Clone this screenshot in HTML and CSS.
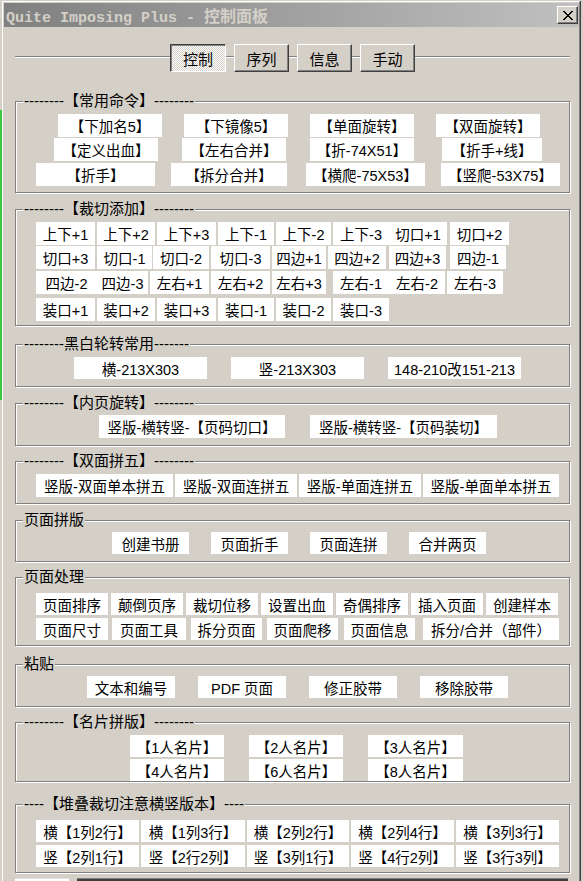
FILE: index.html
```html
<!DOCTYPE html>
<html lang="zh-CN">
<head>
<meta charset="utf-8">
<title>Quite Imposing Plus - 控制面板</title>
<link rel="stylesheet" href="styles.css">
</head>
<body>
<div class="window">
  <div class="titlebar">
    <span class="title">Quite Imposing Plus - <span class="title-cjk">控制面板</span></span>
    <button class="close" aria-label="关闭"><svg width="10" height="9" viewBox="0 0 10 9" shape-rendering="crispEdges"><path fill="#000" d="M0 0h2v1H0z M8 0h2v1H8z M1 1h2v1H1z M7 1h2v1H7z M2 2h2v1H2z M6 2h2v1H6z M3 3h4v1H3z M4 4h2v1H4z M3 5h4v1H3z M2 6h2v1H2z M6 6h2v1H6z M1 7h2v1H1z M7 7h2v1H7z M0 8h2v1H0z M8 8h2v1H8z"/></svg></button>
  </div>

  <div class="tabbar">
    <button class="tab active w56">控制</button>
    <button class="tab">序列</button>
    <button class="tab">信息</button>
    <button class="tab">手动</button>
  </div>

  <section class="group g1">
    <div class="legend">--------【常用命令】--------</div>
    <div class="rows">
      <div class="row r1">
        <button class="btn w104">【下加名5】</button>
        <button class="btn w104">【下镜像5】</button>
        <button class="btn w104">【单面旋转】</button>
        <button class="btn w104">【双面旋转】</button>
      </div>
      <div class="row r2">
        <button class="btn w104">【定义出血】</button>
        <button class="btn w104">【左右合并】</button>
        <button class="btn w104">【折-74X51】</button>
        <button class="btn w100 n4">【折手+线】</button>
      </div>
      <div class="row r3">
        <button class="btn w119">【折手】</button>
        <button class="btn w116">【拆分合并】</button>
        <button class="btn w119 n3">【横爬-75X53】</button>
        <button class="btn w119">【竖爬-53X75】</button>
      </div>
    </div>
  </section>

  <section class="group g2">
    <div class="legend">--------【裁切添加】--------</div>
    <div class="rows">
      <div class="row r1">
        <button class="btn w59">上下+1</button>
        <button class="btn w58">上下+2</button>
        <button class="btn w59">上下+3</button>
        <button class="btn w56">上下-1</button>
        <button class="btn w55">上下-2</button>
        <button class="btn w56">上下-3</button>
        <button class="btn w58 n-2">切口+1</button>
        <button class="btn w59 n1">切口+2</button>
      </div>
      <div class="row r2">
        <button class="btn w59">切口+3</button>
        <button class="btn w55">切口-1</button>
        <button class="btn w56 n-1">切口-2</button>
        <button class="btn w59">切口-3</button>
        <button class="btn w54">四边+1</button>
        <button class="btn w58">四边+2</button>
        <button class="btn w57 n1">四边+3</button>
        <button class="btn w56 n2">四边-1</button>
      </div>
      <div class="row r3">
        <button class="btn w61">四边-2</button>
        <button class="btn w51 n-2">四边-3</button>
        <button class="btn w59">左右+1</button>
        <button class="btn w59">左右+2</button>
        <button class="btn w54">左右+3</button>
        <button class="btn w56 n5">左右-1</button>
        <button class="btn w56 n-2">左右-2</button>
        <button class="btn w56">左右-3</button>
      </div>
      <div class="row r4">
        <button class="btn w59">装口+1</button>
        <button class="btn w58">装口+2</button>
        <button class="btn w59">装口+3</button>
        <button class="btn w56">装口-1</button>
        <button class="btn w55">装口-2</button>
        <button class="btn w56">装口-3</button>
      </div>
    </div>
  </section>

  <section class="group g3">
    <div class="legend">--------黑白轮转常用-------</div>
    <div class="rows">
      <div class="row">
        <button class="btn w133">横-213X303</button>
        <button class="btn w133">竖-213X303</button>
        <button class="btn w133">148-210改151-213</button>
      </div>
    </div>
  </section>

  <section class="group g4">
    <div class="legend">--------【内页旋转】--------</div>
    <div class="rows">
      <div class="row">
        <button class="btn w186">竖版-横转竖-【页码切口】</button>
        <button class="btn w187">竖版-横转竖-【页码装切】</button>
      </div>
    </div>
  </section>

  <section class="group g5">
    <div class="legend">--------【双面拼五】--------</div>
    <div class="rows">
      <div class="row">
        <button class="btn w137">竖版-双面单本拼五</button>
        <button class="btn w122">竖版-双面连拼五</button>
        <button class="btn w122">竖版-单面连拼五</button>
        <button class="btn w136">竖版-单面单本拼五</button>
      </div>
    </div>
  </section>

  <section class="group g6">
    <div class="legend">页面拼版</div>
    <div class="rows">
      <div class="row">
        <button class="btn w77">创建书册</button>
        <button class="btn w77">页面折手</button>
        <button class="btn w77">页面连拼</button>
        <button class="btn w77">合并两页</button>
      </div>
    </div>
  </section>

  <section class="group g7">
    <div class="legend">页面处理</div>
    <div class="rows">
      <div class="row r1">
        <button class="btn w72">页面排序</button>
        <button class="btn w72">颠倒页序</button>
        <button class="btn w72">裁切位移</button>
        <button class="btn w72">设置出血</button>
        <button class="btn w72">奇偶排序</button>
        <button class="btn w72">插入页面</button>
        <button class="btn w72">创建样本</button>
      </div>
      <div class="row r2">
        <button class="btn w72">页面尺寸</button>
        <button class="btn w74">页面工具</button>
        <button class="btn w71 n1">拆分页面</button>
        <button class="btn w71 n1">页面爬移</button>
        <button class="btn w71 n2">页面信息</button>
        <button class="btn w136 n4">拆分/合并（部件）</button>
      </div>
    </div>
  </section>

  <section class="group g8">
    <div class="legend">粘贴</div>
    <div class="rows">
      <div class="row">
        <button class="btn w88">文本和编号</button>
        <button class="btn w88">PDF 页面</button>
        <button class="btn w88">修正胶带</button>
        <button class="btn w88">移除胶带</button>
      </div>
    </div>
  </section>

  <section class="group g9">
    <div class="legend">--------【名片拼版】--------</div>
    <div class="rows">
      <div class="row">
        <button class="btn w94">【1人名片】</button>
        <button class="btn w94">【2人名片】</button>
        <button class="btn w95">【3人名片】</button>
      </div>
      <div class="row">
        <button class="btn w94">【4人名片】</button>
        <button class="btn w94">【6人名片】</button>
        <button class="btn w95">【8人名片】</button>
      </div>
    </div>
  </section>

  <section class="group g10">
    <div class="legend">----【堆叠裁切注意横竖版本】----</div>
    <div class="rows">
      <div class="row">
        <button class="btn w103">横【1列2行】</button>
        <button class="btn w104">横【1列3行】</button>
        <button class="btn w102">横【2列2行】</button>
        <button class="btn w103">横【2列4行】</button>
        <button class="btn w103">横【3列3行】</button>
      </div>
      <div class="row">
        <button class="btn w103">竖【2列1行】</button>
        <button class="btn w104">竖【2行2列】</button>
        <button class="btn w102">竖【3列1行】</button>
        <button class="btn w103">竖【4行2列】</button>
        <button class="btn w103">竖【3行3列】</button>
      </div>
    </div>
  </section>

  <div class="statusbar">
    <div class="status-left"></div>
    <div class="status-right"></div>
  </div>
</div>
</body>
</html>
```

FILE: styles.css
```css
html, body {
  margin: 0;
  padding: 0;
  height: 881px;
  overflow: hidden;
}

body {
  background-color: #d4d0c8;
  background-image: linear-gradient(#3cc83c, #3cc83c);
  background-size: 2px 290px;
  background-position: 0 110px;
  background-repeat: no-repeat;
  font-family: "Liberation Sans", "Noto Sans CJK SC", sans-serif;
  font-size: 14px;
  color: #000;
}

.window {
  margin: 1px 0 0 2px;
  width: 575px;
  height: 900px;
  padding: 1px 0 0 1px;
  border-left: 1px solid #fff;
  border-top: 1px solid #fff;
  border-right: 1px solid #808080;
  box-shadow: 1px 0 0 #404040;
}

/* title bar */
.titlebar {
  height: 24px;
  display: flex;
  align-items: center;
  justify-content: space-between;
  padding: 0 1px;
  background: linear-gradient(to right, #808080, #c0c0c0);
}

.title {
  font-family: "Liberation Mono", "Noto Sans CJK SC", monospace;
  font-weight: bold;
  font-size: 15px;
  color: #d4d0c8;
  white-space: nowrap;
  padding-left: 1px;
}

.title-cjk {
  font-size: 16px;
}

.close {
  box-sizing: border-box;
  width: 21px;
  height: 18px;
  margin: 0;
  padding: 0;
  display: flex;
  align-items: center;
  justify-content: center;
  background: #d4d0c8;
  border: 1px solid;
  border-color: #fff #404040 #404040 #fff;
  box-shadow: inset -1px -1px 0 #808080;
}

.close svg {
  display: block;
}

/* tabs */
.tabbar {
  margin: 17px 0 0 11px;
  width: 555px;
  height: 28px;
  display: flex;
  justify-content: center;
  gap: 8px;
  background: linear-gradient(to bottom,
    transparent 12px, #808080 12px, #808080 13px,
    #fff 13px, #fff 14px, transparent 14px);
}

.tab {
  box-sizing: border-box;
  width: 55px;
  height: 28px;
  margin: 0;
  padding: 0;
  background: #d4d0c8;
  border: 1px solid;
  border-color: #fff #404040 #404040 #fff;
  box-shadow: inset -1px -1px 0 #808080;
  font-family: "Liberation Sans", "Noto Sans CJK SC", sans-serif;
  font-size: 15px;
  color: #000;
}

.tab.active {
  border-color: #404040 #fff #fff #404040;
  box-shadow: inset 1px 1px 0 #808080;
  background: repeating-conic-gradient(#fff 0 25%, #d4d0c8 0 50%) 0 0 / 2px 2px;
}

/* group boxes */
.group {
  box-sizing: border-box;
  width: 555px;
  margin-left: 11px;
  border: 1px solid #808080;
  box-shadow: inset 1px 1px 0 #fff, 1px 1px 0 #fff;
  display: flex;
  flex-direction: column;
}

.legend {
  align-self: flex-start;
  margin: -9px 0 -7px 7px;
  padding: 0 1px;
  height: 16px;
  line-height: 16px;
  background: #d4d0c8;
  font-size: 15px;
  white-space: nowrap;
}

.rows {
  display: flex;
  flex-direction: column;
}

.row {
  display: flex;
  padding-left: 20px;
  gap: 2px;
}

.btn {
  flex: none;
  box-sizing: border-box;
  height: 22px;
  margin: 0;
  padding: 0;
  border: 0;
  background: #fff;
  display: flex;
  align-items: center;
  justify-content: center;
  white-space: nowrap;
  font-family: "Liberation Sans", "Noto Sans CJK SC", sans-serif;
  font-size: 14.5px;
  color: #000;
}

/* group 1 */
.g1 { margin-top: 29px; height: 92px; }
.g1 .rows { margin-top: 12px; gap: 1px; }
.g1 .btn { height: 23px; }
.g1 .r1 { padding-left: 42px; gap: 22px; }
.g1 .r2 { padding-left: 38px; gap: 24px; }
.g1 .r3 { padding-left: 20px; gap: 16px; margin-top: 1px; }

/* group 2 */
.g2 { margin-top: 16px; height: 117px; }
.g2 .rows { margin-top: 12px; }
.g2 .btn { height: 23px; }
.g2 .r2 { margin-top: 1px; }
.g2 .r3 { margin-top: 2px; }
.g2 .r4 { margin-top: 4px; }

/* group 3 */
.g3 { margin-top: 18px; height: 43px; }
.g3 .rows { margin-top: 12px; }
.g3 .row { padding-left: 58px; gap: 24px; }

/* group 4 */
.g4 { margin-top: 16px; height: 43px; }
.g4 .rows { margin-top: 11px; }
.g4 .btn { height: 23px; }
.g4 .row { padding-left: 83px; gap: 25px; }

/* group 5 */
.g5 { margin-top: 15px; height: 43px; }
.g5 .rows { margin-top: 12px; }
.g5 .btn { height: 23px; }

/* group 6 */
.g6 { margin-top: 16px; height: 42px; }
.g6 .rows { margin-top: 11px; }
.g6 .row { padding-left: 96px; gap: 22px; }

/* group 7 */
.g7 { margin-top: 15px; height: 69px; }
.g7 .rows { margin-top: 15px; gap: 3px; }
.g7 .r1 { gap: 3px; }
.g7 .r2 { gap: 4px; }

/* group 8 */
.g8 { margin-top: 18px; height: 43px; }
.g8 .rows { margin-top: 11px; }
.g8 .row { padding-left: 71px; gap: 23px; }

/* group 9 */
.g9 { margin-top: 15px; height: 60px; }
.g9 .rows { margin-top: 12px; gap: 2px; }
.g9 .row { padding-left: 114px; gap: 25px; }

/* group 10 */
.g10 { margin-top: 22px; height: 69px; }
.g10 .rows { margin-top: 15px; gap: 3px; }

/* bottom strip */
.statusbar {
  margin: 5px 0 0 11px;
  display: flex;
  gap: 8px;
  height: 20px;
}

.status-left {
  width: 54px;
  background: #fff;
  border-top: 1px solid #e0e0e0;
}

.status-right {
  width: 491px;
  background: #404040;
  border-top: 1px solid #808080;
}

/* widths */
.w51 { width: 51px; }
.w54 { width: 54px; }
.w55 { width: 55px; }
.w56 { width: 56px; }
.w57 { width: 57px; }
.w58 { width: 58px; }
.w59 { width: 59px; }
.w61 { width: 61px; }
.w71 { width: 71px; }
.w72 { width: 72px; }
.w74 { width: 74px; }
.w77 { width: 77px; }
.w88 { width: 88px; }
.w94 { width: 94px; }
.w95 { width: 95px; }
.w100 { width: 100px; }
.w102 { width: 102px; }
.w103 { width: 103px; }
.w104 { width: 104px; }
.w116 { width: 116px; }
.w119 { width: 119px; }
.w122 { width: 122px; }
.w133 { width: 133px; }
.w136 { width: 136px; }
.w137 { width: 137px; }
.w186 { width: 186px; }
.w187 { width: 187px; }

/* small nudges to match the original form layout */
.n-2 { margin-left: -2px; }
.n-1 { margin-left: -1px; }
.n1 { margin-left: 1px; }
.n2 { margin-left: 2px; }
.n3 { margin-left: 3px; }
.n4 { margin-left: 4px; }
.n5 { margin-left: 5px; }
```
